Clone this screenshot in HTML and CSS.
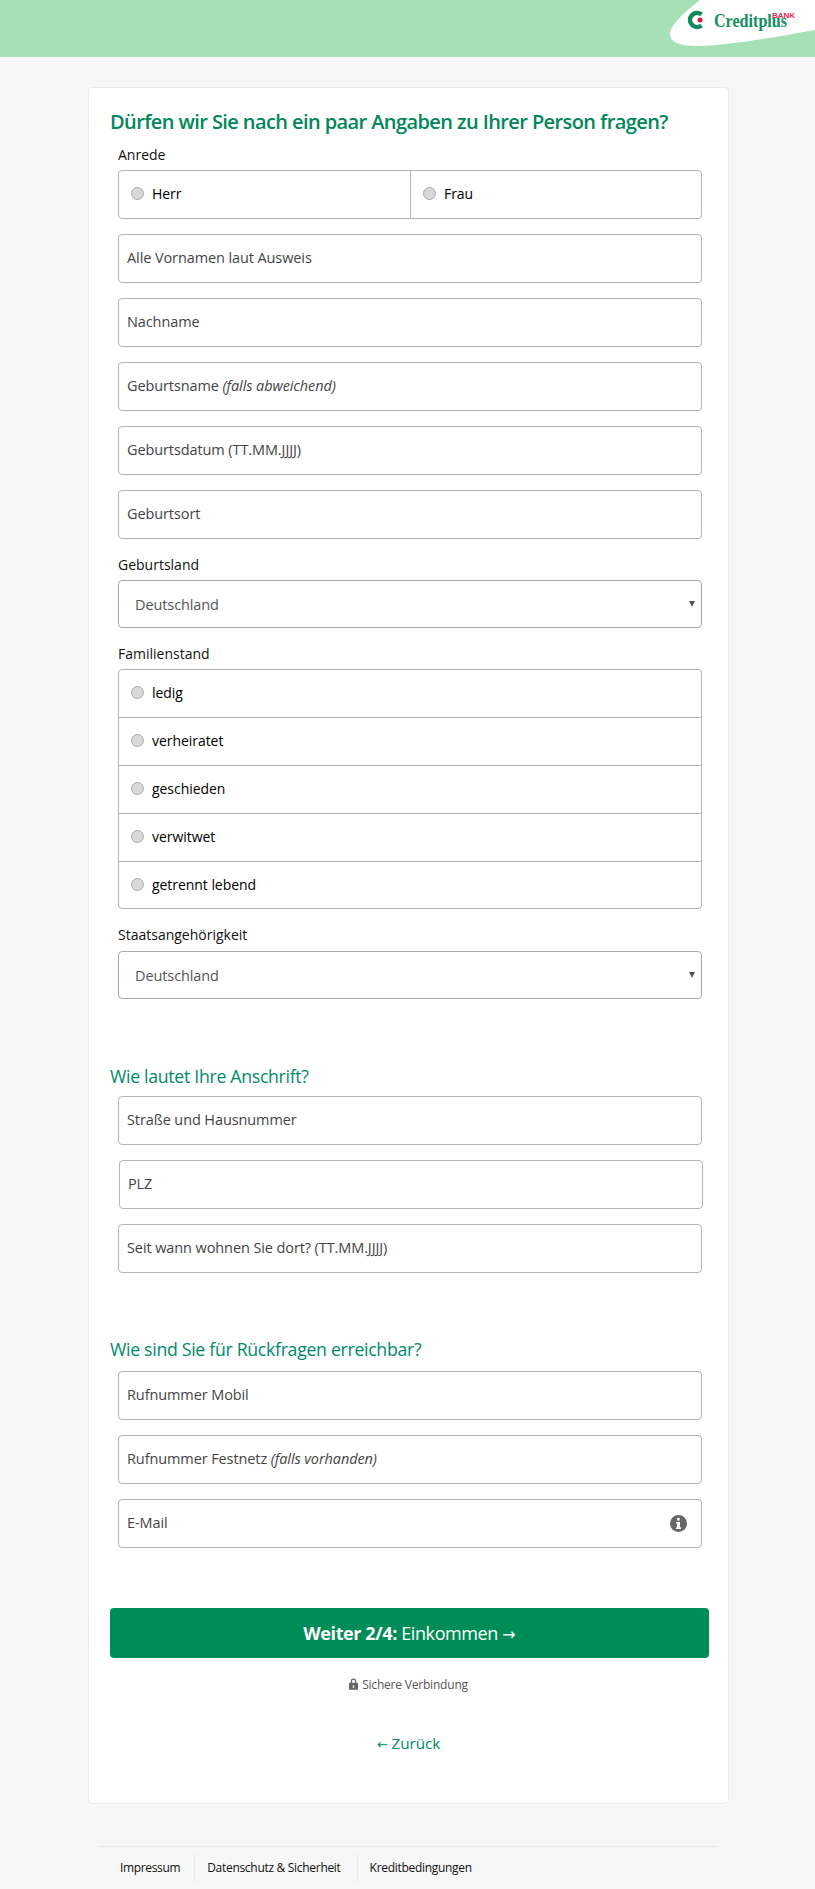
FILE: index.html
```html
<!DOCTYPE html>
<html lang="de">
<head>
<meta charset="utf-8">
<title>Creditplus</title>
<link rel="stylesheet" href="styles.css">
</head>
<body>
<header class="top">
  <svg class="logo" viewBox="0 0 155 57" width="155" height="57">
    <path class="logo-bg" d="M40 0 C27 10 12 23 10 33 C9 42 20 46.500 38 46 C72 45 115 37 155 30 V0 Z"/>
    <path class="logo-c" d="M41.500 14.600 A7 7 0 1 0 41.500 25.400"/>
    <circle class="logo-dot" cx="40" cy="20" r="2.500"/>
    <text class="logo-word" x="54" y="27" textLength="73" lengthAdjust="spacingAndGlyphs">Creditplus</text>
    <text class="logo-bank" x="112" y="18" textLength="23" lengthAdjust="spacingAndGlyphs">BANK</text>
  </svg>
</header>
<main class="card">
  <h1 class="title">Dürfen wir Sie nach ein paar Angaben zu Ihrer Person fragen?</h1>
  <div class="fields">
    <label class="lab lab-first">Anrede</label>
    <div class="group group-row">
      <div class="opt opt-half"><span class="radio"></span><span>Herr</span></div>
      <div class="opt opt-half opt-split"><span class="radio"></span><span>Frau</span></div>
    </div>
    <div class="input">Alle Vornamen laut Ausweis</div>
    <div class="input">Nachname</div>
    <div class="input">Geburtsname&nbsp;<em>(falls abweichend)</em></div>
    <div class="input">Geburtsdatum (TT.MM.JJJJ)</div>
    <div class="input">Geburtsort</div>
    <label class="lab">Geburtsland</label>
    <div class="select"><span>Deutschland</span><span class="arrow"></span></div>
    <label class="lab">Familienstand</label>
    <div class="group">
      <div class="opt"><span class="radio"></span><span>ledig</span></div>
      <div class="opt"><span class="radio"></span><span>verheiratet</span></div>
      <div class="opt"><span class="radio"></span><span>geschieden</span></div>
      <div class="opt"><span class="radio"></span><span>verwitwet</span></div>
      <div class="opt"><span class="radio"></span><span>getrennt lebend</span></div>
    </div>
    <label class="lab lab-wide">Staatsangehörigkeit</label>
    <div class="select"><span>Deutschland</span><span class="arrow"></span></div>
  </div>
  <h2 class="sub sub-a">Wie lautet Ihre Anschrift?</h2>
  <div class="fields">
    <div class="input input-top">Straße und Hausnummer</div>
    <div class="input input-shift">PLZ</div>
    <div class="input">Seit wann wohnen Sie dort? (TT.MM.JJJJ)</div>
  </div>
  <h2 class="sub sub-b">Wie sind Sie für Rückfragen erreichbar?</h2>
  <div class="fields">
    <div class="input input-top">Rufnummer Mobil</div>
    <div class="input">Rufnummer Festnetz&nbsp;<em>(falls vorhanden)</em></div>
    <div class="input input-info">E-Mail
      <svg class="info" viewBox="0 0 18 18" width="17" height="17"><circle cx="9" cy="9" r="9"/><rect class="info-g" x="7.400" y="3" width="3" height="3" rx="1.300"/><path class="info-g" d="M6.400 7.300h4.200v5.600h1.100v1.800H6.300v-1.800h1.200V9.100H6.400z"/></svg>
    </div>
  </div>
  <button class="next" type="button"><strong>Weiter 2/4:</strong> Einkommen <span class="btn-arrow">→</span></button>
  <div class="secure">
    <svg class="lock" viewBox="0 0 10 13" width="9" height="12"><path d="M2 5V3.500a3 3 0 0 1 6 0V5h1a1 1 0 0 1 1 1v6a1 1 0 0 1-1 1H1a1 1 0 0 1-1-1V6a1 1 0 0 1 1-1zm1.300 0h3.400V3.500a1.700 1.700 0 0 0-3.400 0zM4.300 8v3h1.400V8z" fill-rule="evenodd"/></svg>
    <span>Sichere Verbindung</span>
  </div>
  <a class="back" href="#"><span class="back-arrow">←</span> Zurück</a>
</main>
<footer class="foot">
  <a href="#">Impressum</a>
  <a href="#">Datenschutz &amp; Sicherheit</a>
  <a href="#">Kreditbedingungen</a>
</footer>
</body>
</html>
```
FILE: styles.css
```css
* { box-sizing: border-box; }
html, body { margin: 0; padding: 0; }
body {
  background: #f7f7f7;
  font-family: "Open Sans", "Noto Sans", "Liberation Sans", sans-serif;
  font-size: 14.5px;
  color: #000;
  height: 1889px;
  overflow: hidden;
}
.top {
  height: 57px;
  background: #a6e0b6;
  display: flex;
  justify-content: flex-end;
}
.logo { display: block; }
.logo-bg { fill: #fff; }
.logo-c { fill: none; stroke: #0f8a5c; stroke-width: 4.500; }
.logo-dot { fill: #e5173f; }
.logo-word { font-family: "Liberation Serif", serif; font-size: 18px; font-weight: 700; fill: #12905f; }
.logo-bank { font-family: "Liberation Sans", sans-serif; font-size: 7.500px; font-weight: 700; fill: #ea2a50; }
.card {
  width: 641px;
  height: 1717px;
  margin: 30px 0 0 88px;
  background: #fff;
  border: 1px solid #eaeaea;
  border-radius: 4px;
  padding: 20px 21px 0;
}
.title {
  margin: 0;
  font-size: 20px;
  line-height: 28px;
  font-weight: 600;
  color: #00875a;
  letter-spacing: -.59px;
}
.fields {
  margin: 0 0 0 8px;
  width: 584px;
  display: flex;
  flex-direction: column;
}
.lab { font-size: 14px; line-height: 20px; color: #111; height: 20px; margin-top: 16px; margin-bottom: 5px; }
.lab-first { margin-top: 9px; }
.lab-wide { margin-bottom: 6px; }
.group {
  border: 1px solid #b5b5b5;
  border-radius: 4px;
  background: #fff;
}
.group-row { display: flex; height: 49px; }
.opt {
  height: 48px;
  display: flex;
  align-items: center;
  padding: 0 0 2px 12px;
  gap: 8px;
  font-size: 14px;
  letter-spacing: -.05px;
}
.opt:first-child, .opt:last-child { height: 47px; }
.opt + .opt { border-top: 1px solid #b5b5b5; }
.group-row .opt { height: auto; }
.group-row .opt + .opt { border-top: 0; }
.opt-half { width: 291px; }
.opt-split { border-left: 1px solid #b5b5b5; width: 291px; }
.radio {
  width: 13px;
  height: 13px;
  border-radius: 50%;
  background: #d9d9d9;
  border: 1px solid #a9a9a9;
  flex: none;
}
.input {
  height: 49px;
  margin-top: 15px;
  border: 1px solid #b5b5b5;
  border-radius: 4px;
  background: #fff;
  padding: 0 7px 2px 8px;
  display: flex;
  align-items: center;
  color: #444;
  letter-spacing: -.1px;
}
.input em { font-style: italic; }
.input-top { margin-top: 0; }
.input-shift { margin-left: 1px; margin-right: -1px; }
.input-info { justify-content: space-between; padding-right: 14px; }
.info { fill: #666; flex: none; margin-top: 2px; }
.info-g { fill: #fff; }
.select {
  height: 48px;
  border: 1px solid #a9a9a9;
  border-radius: 4px;
  padding: 0 6px 0 16px;
  display: flex;
  align-items: center;
  justify-content: space-between;
  color: #555;
  letter-spacing: -.1px;
}
.arrow {
  width: 0;
  height: 0;
  border-left: 3px solid transparent;
  border-right: 3px solid transparent;
  border-top: 6px solid #555;
}
.sub {
  margin: 0;
  font-size: 17.700px;
  font-weight: 400;
  line-height: 26px;
  color: #008a6a;
  letter-spacing: -.3px;
}
.sub-a { margin-top: 64px; margin-bottom: 7px; }
.sub-b { margin-top: 63px; margin-bottom: 9px; }
.next {
  display: block;
  width: 599px;
  height: 50px;
  margin-top: 60px;
  border: 0;
  border-radius: 4px;
  background: #008c57;
  color: #fff;
  font-family: inherit;
  font-size: 18px;
  letter-spacing: -.4px;
}
.btn-arrow { font-family: "DejaVu Sans", sans-serif; font-size: 16px; letter-spacing: 0; }
.secure {
  margin-top: 17px;
  display: flex;
  justify-content: center;
  align-items: center;
  gap: 4px;
  font-size: 12px;
  color: #555;
  height: 18px;
  letter-spacing: -.2px;
}
.lock { fill: #666; }
.back {
  display: block;
  text-align: center;
  margin-top: 39px;
  color: #008a6a;
  font-size: 15.300px;
  line-height: 22px;
  text-decoration: none;
  letter-spacing: -.1px;
}
.back-arrow { font-family: "DejaVu Sans", sans-serif; font-size: 13px; }
.foot {
  width: 620px;
  margin: 42px 0 0 98px;
  border-top: 1px solid #e9e9e9;
  padding-top: 7px;
  display: flex;
  font-size: 12px;
}
.foot a {
  color: #111;
  text-decoration: none;
  height: 28px;
  line-height: 28px;
  padding: 0 14px 0 22px;
  letter-spacing: -.35px;
}
.foot a + a { border-left: 1px solid #e9e9e9; padding: 0 16px 0 12px; letter-spacing: -.3px; }
```
